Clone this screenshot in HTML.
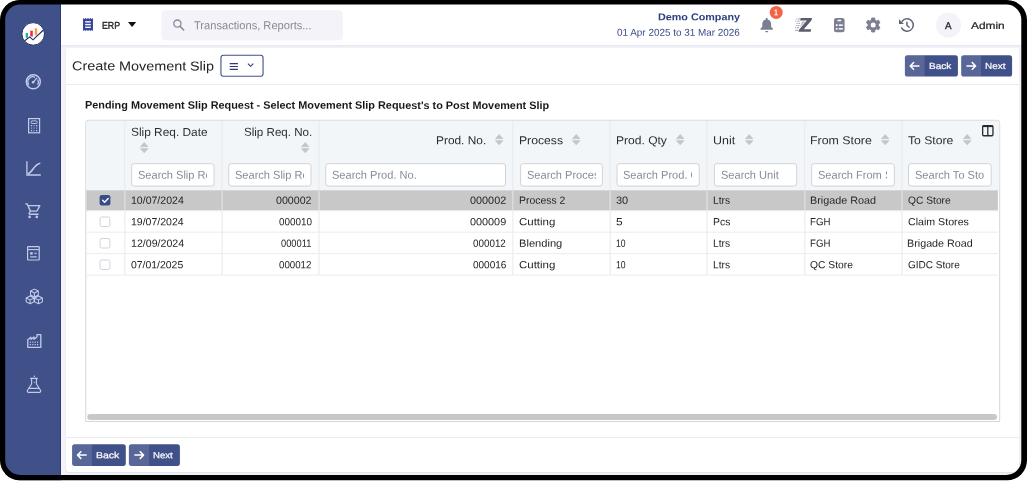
<!DOCTYPE html>
<html lang="en"><head><meta charset="utf-8"><title>Create Movement Slip</title>
<style>
html,body{margin:0;padding:0;}
body{-webkit-font-smoothing:antialiased;width:1027px;height:481px;overflow:hidden;background:#fff;font-family:"Liberation Sans",sans-serif;position:relative;}
.a{position:absolute;box-sizing:border-box;}
.t{position:absolute;white-space:nowrap;line-height:20px;transform-origin:0 0;}
svg{position:absolute;overflow:visible;}
</style></head><body>
<div class="a" id="screen" style="left:0;top:0;width:1027px;height:481px;background:#f3f3f9;overflow:hidden;will-change:transform;">
<div class="a" style="left:0;top:0;width:1027px;height:481px;">
<div class="a" style="left:5.00px;top:0.00px;width:56.00px;height:481.00px;background:#405189;"></div>
<div class="a" style="left:60.00px;top:0.00px;width:1.00px;height:481.00px;background:#2b3b7a;"></div>
<div class="a" style="left:61.00px;top:0.00px;width:966.00px;height:45.00px;background:#fff;box-shadow:0 1px 2px rgba(56,65,74,.08);"></div>
<div class="a" style="left:65.80px;top:47.80px;width:953.10px;height:424.60px;background:#fff;border-radius:3px;box-shadow:0 1px 2px rgba(56,65,74,.10);"></div>
<div class="a" style="left:65.80px;top:83.80px;width:953.10px;height:1.00px;background:#e9ebec;"></div>
<div class="a" style="left:65.80px;top:437.00px;width:953.10px;height:1.00px;background:#e9ebec;"></div>
<svg style="left:83px;top:17.8px" width="10" height="13" viewBox="0 0 10 13"><path d="M0 0l1.25 .9 1.25-.9 1.25 .9 1.25-.9 1.25 .9 1.25-.9 1.25 .9 1.25-.9v13l-1.25-.9-1.25 .9-1.25-.9-1.25 .9-1.25-.9-1.25 .9-1.25-.9-1.25 .9z" fill="#34479a"/><rect x="2.2" y="3.2" width="5.6" height="1.3" fill="#fff"/><rect x="2.2" y="5.9" width="5.6" height="1.3" fill="#fff"/><rect x="2.2" y="8.6" width="5.6" height="1.3" fill="#fff"/></svg>
<span class="t" style="left:102.08px;top:15px;font-size:9.8px;color:#212529;transform:translate(0,0.79px) rotate(.05deg) scaleX(0.8977);-webkit-text-stroke:.35px #212529;">ERP</span>
<svg style="left:127.8px;top:21.8px" width="8.2" height="5" viewBox="0 0 8.2 5"><path d="M0 0h8.2l-4.1 5z" fill="#111"/></svg>
<svg style="left:160px;top:9px" width="184" height="33"><rect x="1.50" y="1.30" width="181.50" height="29.90" rx="4" fill="#f3f3f9"/></svg>
<svg style="left:172px;top:18px" width="14" height="14" viewBox="0 0 14 14"><circle cx="5.4" cy="5.6" r="3.6" fill="none" stroke="#878a99" stroke-width="1.3"/><path d="M8.1 8.4l3.6 3.6" stroke="#878a99" stroke-width="1.5" stroke-linecap="round"/></svg>
<span class="t" style="left:193.76px;top:15px;font-size:11.5px;color:#878a99;transform:translate(0,0.25px) rotate(.05deg) scaleX(0.9664);">Transactions, Reports...</span>
<span class="t" style="left:657.68px;top:7px;font-size:9.9px;color:#2c3e7e;transform:translate(0,0.16px) rotate(.05deg) scaleX(1.0905);font-weight:700;">Demo Company</span>
<span class="t" style="left:617.11px;top:22px;font-size:9.9px;color:#3b4c8c;transform:translate(0,0.75px) rotate(.05deg) scaleX(1.0031);">01 Apr 2025 to 31 Mar 2026</span>
<svg style="left:760px;top:18px" width="13.4" height="14.6" viewBox="0 0 13.4 14.6"><path d="M6.7 0c.6 0 1 .4 1 1v.4c2 .5 3.4 2.2 3.4 4.4v3l1.7 1.8c.4.4.1 1.1-.5 1.1H1.100c-.6 0-.9-.7-.5-1.100l1.700-1.800v-3c0-2.200 1.400-3.900 3.400-4.400v-.4c0-.6.400-1 1-1z" fill="#7c7f92"/><rect x="5.2" y="13" width="3" height="1.2" rx=".6" fill="#7c7f92"/></svg>
<svg style="left:768px;top:4px" width="16" height="16"><rect x="1.70" y="1.90" width="13.00" height="13.00" rx="6.5" fill="#f06548"/></svg>
<span class="t" style="left:774.15px;top:2px;font-size:8.4px;color:#fff;transform:translate(0,0.30px) rotate(.05deg) scaleX(0.8449);font-weight:700;">1</span>
<svg style="left:0;top:0" width="1027" height="60"><path d="M800.6 18.100H812.200L811.400 20.500L803.800 29.200H811.200L810.600 31.700H798.500L799.200 29.400L806.900 20.500H800.100Z" fill="#5c5e70"/><path d="M802 21.800h3.300l-.8 .9h-2.800zM801.300 23.600h2.400l-.8 .9h-1.900zM800.500 25.400h1.800l-.8 .9h-1.300z" fill="#9a9cab"/><g fill="#9fa1ae"><rect x="796.200" y="18.600" width="1.100" height="1"/><rect x="798.200" y="18.400" width="1.700" height="1.100"/><rect x="795.400" y="20.800" width="1" height="1"/><rect x="797.400" y="20.600" width="2" height="1.100"/><rect x="796.600" y="23" width="1.100" height="1"/><rect x="798.500" y="22.800" width="1.600" height="1.100"/><rect x="795.800" y="25.200" width="1" height="1"/><rect x="797.600" y="25" width="1.800" height="1.100"/><rect x="795" y="27.400" width="1.100" height="1"/><rect x="796.800" y="27.200" width="2.200" height="1.100"/><rect x="794.800" y="30" width="1" height="1"/><rect x="796.300" y="29.800" width="2" height="1.200"/></g></svg>
<svg style="left:834.4px;top:17.9px" width="10.600" height="14.200" viewBox="0 0 10.600 14.200"><rect x="0" y="0" width="10.600" height="14.200" rx="2.300" fill="#7c7f92"/><rect x="3.300" y="1.800" width="4" height="1.500" rx=".7" fill="#fff"/><g fill="#fff"><rect x="1.900" y="6.200" width="1.600" height="1.900"/><rect x="4.800" y="6.400" width="4" height="1.500"/><rect x="1.900" y="10" width="1.600" height="1.700"/><rect x="4.800" y="10.100" width="4" height="1.500"/></g></svg>
<svg style="left:0;top:0" width="1027" height="60"><path d="M871.59 20.05 L871.72 18.06 L874.68 18.06 L874.81 20.05 L876.68 21.14 L878.48 20.25 L879.95 22.81 L878.29 23.92 L878.29 26.08 L879.95 27.19 L878.48 29.75 L876.68 28.86 L874.81 29.95 L874.68 31.94 L871.72 31.94 L871.59 29.95 L869.72 28.86 L867.92 29.75 L866.45 27.19 L868.11 26.08 L868.11 23.92 L866.45 22.81 L867.92 20.25 L869.72 21.14Z" fill="#7c7f92" stroke="#7c7f92" stroke-width="1" stroke-linejoin="round"/><circle cx="873.2" cy="25" r="2.5" fill="#fff"/></svg>
<svg style="left:0;top:0" width="1027" height="60"><path d="M902.21 21.18A6.2 6.2 0 1 1 901.63 27.91" fill="none" stroke="#626579" stroke-width="1.500" stroke-linecap="round"/><path d="M899 19.300V23.900H904Z" fill="#626579"/><path d="M906.900 22.200V25.300L909.200 27.300" fill="none" stroke="#626579" stroke-width="1.500" stroke-linecap="round" stroke-linejoin="round"/></svg>
<svg style="left:934px;top:11px" width="28" height="28"><rect x="1.80" y="1.50" width="25.20" height="25.20" rx="12.6" fill="#f3f3f9"/></svg>
<span class="t" style="left:944.88px;top:15px;font-size:9.8px;color:#212529;transform:translate(0,1.00px) rotate(.05deg) scaleX(1.0004);-webkit-text-stroke:.3px #212529;">A</span>
<span class="t" style="left:971.08px;top:15px;font-size:10px;color:#212529;transform:translate(0,0.99px) rotate(.05deg) scaleX(1.1890);-webkit-text-stroke:.2px #212529;">Admin</span>
<svg style="left:20px;top:20px" width="28" height="28" viewBox="20 20 28 28"><circle cx="33.200" cy="33.900" r="11.300" fill="#fff" stroke="#22316c" stroke-width="1"/><rect x="25.700" y="33" width="2.300" height="4.800" fill="#1fb58f"/><rect x="30.300" y="30.700" width="2.500" height="5.800" fill="#e8264f"/><rect x="34.800" y="28.300" width="2.400" height="7" fill="#ff9a3c"/><path d="M24.700 40.700L29.700 36.900L33 39.800L43.400 30" fill="none" stroke="#1b2a63" stroke-width="1.100"/></svg>
<svg style="left:23px;top:71px" width="22" height="22" viewBox="23 71 22 22"><circle cx="33.300" cy="81.700" r="7" fill="none" stroke="#c3cbec" stroke-width="1.450"/><path d="M28.900 84.800a5 5 0 0 1 6.200-7.500M37.700 79.500a5 5 0 0 1 0 5.300" fill="none" stroke="#c3cbec" stroke-width="1.300"/><circle cx="33.100" cy="82.300" r="1.300" fill="#c3cbec"/><path d="M33.300 82L36.800 78.200" stroke="#c3cbec" stroke-width="1.200" stroke-linecap="round"/></svg>
<svg style="left:27.900px;top:117.900px" width="12.200" height="15.400" viewBox="0 0 12.200 15.400"><rect x=".6" y=".6" width="11" height="14.200" fill="none" stroke="#c3cbec" stroke-width="1.200"/><rect x="3.100" y="2.900" width="6" height="2.600" rx=".8" fill="none" stroke="#c3cbec" stroke-width=".9"/><g fill="#c3cbec"><rect x="2.900" y="7" width="1.300" height="1.300"/><rect x="5.450" y="7" width="1.300" height="1.300" opacity=".6"/><rect x="8" y="7" width="1.300" height="1.300"/><rect x="2.900" y="9.500" width="1.300" height="1.300" opacity=".6"/><rect x="5.450" y="9.500" width="1.300" height="1.300" opacity=".6"/><rect x="8" y="9.500" width="1.300" height="1.300" opacity=".6"/><rect x="2.900" y="12" width="1.300" height="1.300"/><rect x="5.450" y="12" width="1.300" height="1.300" opacity=".6"/><rect x="8" y="12" width="1.300" height="1.300"/></g></svg>
<svg style="left:25px;top:160px" width="18" height="18" viewBox="25 160 18 18"><path d="M26.900 161.200V175H40.800" fill="none" stroke="#c3cbec" stroke-width="1.300"/><path d="M27.800 173.700C33 172.500 33.500 164.500 40.300 163.300" fill="none" stroke="#c3cbec" stroke-width="1.500"/></svg>
<svg style="left:24px;top:202px" width="18" height="18" viewBox="24 202 18 18"><path d="M25.300 203.800h1.800l3.300 7.300l-1.200 1.900c-.3.500 0 1.200.7 1.200h8.600M28.700 205.600h11.100l-2.500 4.900c-.2.400-.5.600-1 .6h-5.900" fill="none" stroke="#c3cbec" stroke-width="1.350" stroke-linejoin="round"/><circle cx="29.600" cy="216.900" r="1.300" fill="#c3cbec"/><circle cx="36.800" cy="216.900" r="1.300" fill="#c3cbec"/></svg>
<svg style="left:27.200px;top:246px" width="13" height="15" viewBox="0 0 13 15"><rect x=".6" y=".6" width="11.600" height="13.400" rx=".5" fill="none" stroke="#c3cbec" stroke-width="1.200"/><path d="M.6 3.600h11.600" stroke="#c3cbec" stroke-width="1.100"/><rect x="3.200" y="6.200" width="2.500" height="2.400" fill="#c3cbec"/><rect x="7.200" y="6.700" width="2.600" height="1.400" fill="#c3cbec" opacity=".8"/><rect x="3.200" y="10.300" width="6.600" height="1.200" fill="#c3cbec"/></svg>
<svg style="left:24px;top:287px" width="20" height="20" viewBox="24 287 20 20"><path d="M34.4 289.10L38.30 291.05V294.95L34.4 296.90L30.50 294.95V291.05ZM30.50 291.05L34.4 293.00L38.30 291.05M34.4 293.00V296.90M30.1 296.00L34.00 297.95V301.85L30.1 303.80L26.20 301.85V297.95ZM26.20 297.95L30.1 299.90L34.00 297.95M30.1 299.90V303.80M38.5 296.00L42.40 297.95V301.85L38.5 303.80L34.60 301.85V297.95ZM34.60 297.95L38.5 299.90L42.40 297.95M38.5 299.90V303.80" fill="none" stroke="#c3cbec" stroke-width="1.050" stroke-linejoin="round"/></svg>
<svg style="left:26px;top:333px" width="16" height="16" viewBox="26 333 16 16"><path d="M27.800 347.400V339.800L31 337.300V339.300L34 337V339.300L37 337V334.700H40.800V347.400Z" fill="none" stroke="#c3cbec" stroke-width="1.300" stroke-linejoin="round"/><g fill="#c3cbec"><rect x="29.800" y="341.600" width="1.200" height="1.200"/><rect x="32.200" y="341.600" width="1.200" height="1.200"/><rect x="34.600" y="341.600" width="1.200" height="1.200"/><rect x="37" y="341.600" width="1.200" height="1.200"/><rect x="29.800" y="344" width="1.200" height="1.200"/><rect x="32.200" y="344" width="1.200" height="1.200"/><rect x="34.600" y="344" width="1.200" height="1.200"/><rect x="37" y="344" width="1.200" height="1.200"/></g></svg>
<svg style="left:25px;top:374px" width="18" height="20" viewBox="25 374 18 20"><path d="M30.600 378.400H37.400M31.600 378.600V384L27.500 390.200C26.900 391.300 27.500 392.400 28.800 392.400H39.200C40.500 392.400 41.100 391.300 40.500 390.200L36.400 384V378.600M29 388.300H39" fill="none" stroke="#c3cbec" stroke-width="1.150" stroke-linejoin="round" stroke-linecap="round"/><circle cx="34.400" cy="376.300" r=".8" fill="#c3cbec"/><circle cx="34.300" cy="382.300" r=".6" fill="#c3cbec"/></svg>
<span class="t" style="left:71.77px;top:56px;font-size:13px;color:#212529;transform:translate(0,0.34px) rotate(.05deg) scaleX(1.1081);word-spacing:-0.214px;">Create Movement Slip</span>
<svg style="left:219px;top:53px" width="46" height="25"><rect x="1.95" y="2.25" width="42.10" height="21.00" rx="2.45" fill="#fff" stroke="#405189" stroke-width="1.1"/></svg>
<svg style="left:229px;top:61px" width="26" height="10" viewBox="229 61 26 10"><path d="M229.700 63.600h8.200M229.700 66.500h8.200M229.700 69.400h8.200" stroke="#2a3a7a" stroke-width="1.100"/><path d="M247.900 63.600l2.700 2.700l2.700-2.700" fill="none" stroke="#2a3a7a" stroke-width="1.100"/></svg>
<svg style="left:0;top:0" width="1027" height="481"><rect x="904.90" y="55.30" width="53.00" height="21.30" rx="2.6" fill="#405189"/><path d="M907.50 55.30H924.60V76.60H907.50A2.6 2.6 0 0 1 904.90 74.00V57.90A2.6 2.6 0 0 1 907.50 55.30Z" fill="#fff" fill-opacity=".13"/><path d="M919.45 65.95H910.55M914.05 62.15L910.25 65.95L914.05 69.75" fill="none" stroke="#fff" stroke-width="1.500" stroke-linejoin="round"/></svg>
<span class="t" style="left:928.57px;top:55px;font-size:8.9px;color:#fff;transform:translate(0,0.89px) rotate(.05deg) scaleX(1.1330);-webkit-text-stroke:.2px #fff;">Back</span>
<svg style="left:0;top:0" width="1027" height="481"><rect x="961.20" y="55.30" width="50.90" height="21.30" rx="2.6" fill="#405189"/><path d="M963.80 55.30H981.00V76.60H963.80A2.6 2.6 0 0 1 961.20 74.00V57.90A2.6 2.6 0 0 1 963.80 55.30Z" fill="#fff" fill-opacity=".13"/><path d="M966.40 65.95H975.30M971.80 62.15L975.60 65.95L971.80 69.75" fill="none" stroke="#fff" stroke-width="1.500" stroke-linejoin="round"/></svg>
<span class="t" style="left:984.68px;top:55px;font-size:8.9px;color:#fff;transform:translate(0,0.89px) rotate(.05deg) scaleX(1.1196);-webkit-text-stroke:.2px #fff;">Next</span>
<svg style="left:0;top:0" width="1027" height="481"><rect x="72.10" y="444.30" width="53.70" height="21.60" rx="2.6" fill="#405189"/><path d="M74.70 444.30H91.90V465.90H74.70A2.6 2.6 0 0 1 72.10 463.30V446.90A2.6 2.6 0 0 1 74.70 444.30Z" fill="#fff" fill-opacity=".13"/><path d="M86.70 455.10H77.80M81.30 451.30L77.50 455.10L81.30 458.90" fill="none" stroke="#fff" stroke-width="1.500" stroke-linejoin="round"/></svg>
<span class="t" style="left:95.73px;top:445px;font-size:8.9px;color:#fff;transform:translate(0,0.29px) rotate(.05deg) scaleX(1.1855);-webkit-text-stroke:.2px #fff;">Back</span>
<svg style="left:0;top:0" width="1027" height="481"><rect x="128.90" y="444.30" width="51.00" height="21.60" rx="2.6" fill="#405189"/><path d="M131.50 444.30H149.20V465.90H131.50A2.6 2.6 0 0 1 128.90 463.30V446.90A2.6 2.6 0 0 1 131.50 444.30Z" fill="#fff" fill-opacity=".13"/><path d="M134.35 455.10H143.25M139.75 451.30L143.55 455.10L139.75 458.90" fill="none" stroke="#fff" stroke-width="1.500" stroke-linejoin="round"/></svg>
<span class="t" style="left:153.11px;top:445px;font-size:8.9px;color:#fff;transform:translate(0,0.29px) rotate(.05deg) scaleX(1.0853);-webkit-text-stroke:.2px #fff;">Next</span>
<span class="t" style="left:84.77px;top:94px;font-size:10.8px;color:#16181b;transform:translate(0,0.60px) rotate(.05deg) scaleX(1.0073);font-weight:700;word-spacing:-0.011px;">Pending Movement Slip Request - Select Movement Slip Request&#x27;s to Post Movement Slip</span>
<svg style="left:0;top:0" width="1027" height="481"><path d="M85.80 421.50V122.80A2.500 2.500 0 0 1 88.30 120.30H997.20A2.500 2.500 0 0 1 999.70 122.80V421.50Z" fill="#fff" stroke="#d3d5d8" stroke-width="1"/></svg>
<svg style="left:85px;top:119px" width="916" height="73"><rect x="1.30" y="1.80" width="912.90" height="69.50" rx="2" fill="#f3f6f9"/></svg>
<svg style="left:85px;top:122px" width="916" height="70"><rect x="1.30" y="1.80" width="912.90" height="66.50" rx="0" fill="#f3f6f9"/></svg>
<svg style="left:85px;top:189px" width="914" height="23"><rect x="1.30" y="1.30" width="911.60" height="20.20" rx="0" fill="#c8c8c8"/></svg>
<svg style="left:122px;top:119px" width="5" height="73"><rect x="1.95" y="1.80" width="1.40" height="69.50" rx="0" fill="#eaedf0"/></svg>
<svg style="left:122px;top:189px" width="5" height="23"><rect x="1.95" y="1.30" width="1.60" height="20.20" rx="0" fill="#dbdbdb"/></svg>
<svg style="left:122px;top:209px" width="5" height="68"><rect x="1.95" y="1.50" width="1.60" height="64.70" rx="0" fill="#f0f1f2"/></svg>
<svg style="left:220px;top:119px" width="4" height="73"><rect x="1.35" y="1.80" width="1.40" height="69.50" rx="0" fill="#eaedf0"/></svg>
<svg style="left:220px;top:189px" width="4" height="23"><rect x="1.35" y="1.30" width="1.60" height="20.20" rx="0" fill="#dbdbdb"/></svg>
<svg style="left:220px;top:209px" width="4" height="68"><rect x="1.35" y="1.50" width="1.60" height="64.70" rx="0" fill="#f0f1f2"/></svg>
<svg style="left:317px;top:119px" width="4" height="73"><rect x="1.25" y="1.80" width="1.40" height="69.50" rx="0" fill="#eaedf0"/></svg>
<svg style="left:317px;top:189px" width="4" height="23"><rect x="1.25" y="1.30" width="1.60" height="20.20" rx="0" fill="#dbdbdb"/></svg>
<svg style="left:317px;top:209px" width="4" height="68"><rect x="1.25" y="1.50" width="1.60" height="64.70" rx="0" fill="#f0f1f2"/></svg>
<svg style="left:510px;top:119px" width="5" height="73"><rect x="1.95" y="1.80" width="1.40" height="69.50" rx="0" fill="#eaedf0"/></svg>
<svg style="left:510px;top:189px" width="5" height="23"><rect x="1.95" y="1.30" width="1.60" height="20.20" rx="0" fill="#dbdbdb"/></svg>
<svg style="left:510px;top:209px" width="5" height="68"><rect x="1.95" y="1.50" width="1.60" height="64.70" rx="0" fill="#f0f1f2"/></svg>
<svg style="left:608px;top:119px" width="4" height="73"><rect x="1.35" y="1.80" width="1.40" height="69.50" rx="0" fill="#eaedf0"/></svg>
<svg style="left:608px;top:189px" width="4" height="23"><rect x="1.35" y="1.30" width="1.60" height="20.20" rx="0" fill="#dbdbdb"/></svg>
<svg style="left:608px;top:209px" width="4" height="68"><rect x="1.35" y="1.50" width="1.60" height="64.70" rx="0" fill="#f0f1f2"/></svg>
<svg style="left:705px;top:119px" width="4" height="73"><rect x="1.25" y="1.80" width="1.40" height="69.50" rx="0" fill="#eaedf0"/></svg>
<svg style="left:705px;top:189px" width="4" height="23"><rect x="1.25" y="1.30" width="1.60" height="20.20" rx="0" fill="#dbdbdb"/></svg>
<svg style="left:705px;top:209px" width="4" height="68"><rect x="1.25" y="1.50" width="1.60" height="64.70" rx="0" fill="#f0f1f2"/></svg>
<svg style="left:802px;top:119px" width="5" height="73"><rect x="1.95" y="1.80" width="1.40" height="69.50" rx="0" fill="#eaedf0"/></svg>
<svg style="left:802px;top:189px" width="5" height="23"><rect x="1.95" y="1.30" width="1.60" height="20.20" rx="0" fill="#dbdbdb"/></svg>
<svg style="left:802px;top:209px" width="5" height="68"><rect x="1.95" y="1.50" width="1.60" height="64.70" rx="0" fill="#f0f1f2"/></svg>
<svg style="left:900px;top:119px" width="4" height="73"><rect x="1.25" y="1.80" width="1.40" height="69.50" rx="0" fill="#eaedf0"/></svg>
<svg style="left:900px;top:189px" width="4" height="23"><rect x="1.25" y="1.30" width="1.60" height="20.20" rx="0" fill="#dbdbdb"/></svg>
<svg style="left:900px;top:209px" width="4" height="68"><rect x="1.25" y="1.50" width="1.60" height="64.70" rx="0" fill="#f0f1f2"/></svg>
<svg style="left:85px;top:209px" width="914" height="4"><rect x="1.30" y="1.50" width="911.60" height="0.80" rx="0" fill="#ecedee"/></svg>
<svg style="left:85px;top:230px" width="914" height="4"><rect x="1.30" y="1.60" width="911.60" height="1.10" rx="0" fill="#ecedee"/></svg>
<svg style="left:85px;top:252px" width="914" height="4"><rect x="1.30" y="1.10" width="911.60" height="1.10" rx="0" fill="#ecedee"/></svg>
<svg style="left:85px;top:273px" width="914" height="4"><rect x="1.30" y="1.60" width="911.60" height="1.10" rx="0" fill="#ecedee"/></svg>
<span class="t" style="left:131.07px;top:121px;font-size:11.6px;color:#2a2e32;transform:translate(0,0.87px) rotate(.05deg) scaleX(1.0249);">Slip Req. Date</span>
<svg style="left:140.2px;top:142.2px" width="8.400" height="11.300" viewBox="0 0 8.400 11.300"><path d="M.5 4.700L4.200 .5L7.900 4.700Z" fill="#c4c5c9" stroke="#c4c5c9" stroke-width=".8" stroke-linejoin="round"/><path d="M.5 6.700L4.200 10.800L7.900 6.700Z" fill="#c4c5c9" stroke="#c4c5c9" stroke-width=".8" stroke-linejoin="round"/></svg>
<span class="t" style="left:244.08px;top:121px;font-size:11.6px;color:#2a2e32;transform:translate(0,0.87px) rotate(.05deg) scaleX(0.9990);">Slip Req. No.</span>
<svg style="left:300.7px;top:142.2px" width="8.400" height="11.300" viewBox="0 0 8.400 11.300"><path d="M.5 4.700L4.200 .5L7.900 4.700Z" fill="#c4c5c9" stroke="#c4c5c9" stroke-width=".8" stroke-linejoin="round"/><path d="M.5 6.700L4.200 10.800L7.900 6.700Z" fill="#c4c5c9" stroke="#c4c5c9" stroke-width=".8" stroke-linejoin="round"/></svg>
<span class="t" style="left:436.32px;top:130px;font-size:11.6px;color:#2a2e32;transform:translate(0,0.18px) rotate(.05deg) scaleX(1.0257);">Prod. No.</span>
<svg style="left:494.6px;top:133.8px" width="8.400" height="11.300" viewBox="0 0 8.400 11.300"><path d="M.5 4.700L4.200 .5L7.900 4.700Z" fill="#c4c5c9" stroke="#c4c5c9" stroke-width=".8" stroke-linejoin="round"/><path d="M.5 6.700L4.200 10.800L7.900 6.700Z" fill="#c4c5c9" stroke="#c4c5c9" stroke-width=".8" stroke-linejoin="round"/></svg>
<span class="t" style="left:519.10px;top:130px;font-size:11.6px;color:#2a2e32;transform:translate(0,0.18px) rotate(.05deg) scaleX(1.0511);">Process</span>
<svg style="left:572px;top:133.8px" width="8.400" height="11.300" viewBox="0 0 8.400 11.300"><path d="M.5 4.700L4.200 .5L7.900 4.700Z" fill="#c4c5c9" stroke="#c4c5c9" stroke-width=".8" stroke-linejoin="round"/><path d="M.5 6.700L4.200 10.800L7.900 6.700Z" fill="#c4c5c9" stroke="#c4c5c9" stroke-width=".8" stroke-linejoin="round"/></svg>
<span class="t" style="left:616.01px;top:130px;font-size:11.6px;color:#2a2e32;transform:translate(0,0.18px) rotate(.05deg) scaleX(1.0391);">Prod. Qty</span>
<svg style="left:676.1px;top:133.8px" width="8.400" height="11.300" viewBox="0 0 8.400 11.300"><path d="M.5 4.700L4.200 .5L7.900 4.700Z" fill="#c4c5c9" stroke="#c4c5c9" stroke-width=".8" stroke-linejoin="round"/><path d="M.5 6.700L4.200 10.800L7.900 6.700Z" fill="#c4c5c9" stroke="#c4c5c9" stroke-width=".8" stroke-linejoin="round"/></svg>
<span class="t" style="left:712.94px;top:130px;font-size:11.6px;color:#2a2e32;transform:translate(0,0.19px) rotate(.05deg) scaleX(1.0731);">Unit</span>
<svg style="left:744.8px;top:133.8px" width="8.400" height="11.300" viewBox="0 0 8.400 11.300"><path d="M.5 4.700L4.200 .5L7.900 4.700Z" fill="#c4c5c9" stroke="#c4c5c9" stroke-width=".8" stroke-linejoin="round"/><path d="M.5 6.700L4.200 10.800L7.900 6.700Z" fill="#c4c5c9" stroke="#c4c5c9" stroke-width=".8" stroke-linejoin="round"/></svg>
<span class="t" style="left:810.09px;top:130px;font-size:11.6px;color:#2a2e32;transform:translate(0,0.17px) rotate(.05deg) scaleX(1.0663);">From Store</span>
<svg style="left:880.5px;top:133.8px" width="8.400" height="11.300" viewBox="0 0 8.400 11.300"><path d="M.5 4.700L4.200 .5L7.900 4.700Z" fill="#c4c5c9" stroke="#c4c5c9" stroke-width=".8" stroke-linejoin="round"/><path d="M.5 6.700L4.200 10.800L7.900 6.700Z" fill="#c4c5c9" stroke="#c4c5c9" stroke-width=".8" stroke-linejoin="round"/></svg>
<span class="t" style="left:908.13px;top:130px;font-size:11.6px;color:#2a2e32;transform:translate(0,0.18px) rotate(.05deg) scaleX(1.0511);">To Store</span>
<svg style="left:962.5px;top:133.8px" width="8.400" height="11.300" viewBox="0 0 8.400 11.300"><path d="M.5 4.700L4.200 .5L7.900 4.700Z" fill="#c4c5c9" stroke="#c4c5c9" stroke-width=".8" stroke-linejoin="round"/><path d="M.5 6.700L4.200 10.800L7.900 6.700Z" fill="#c4c5c9" stroke="#c4c5c9" stroke-width=".8" stroke-linejoin="round"/></svg>
<svg style="left:982.200px;top:125.200px" width="11.600" height="11.400" viewBox="0 0 11.600 11.400"><rect x=".65" y=".65" width="10.300" height="10.100" rx="1" fill="none" stroke="#2b2b2b" stroke-width="1.300"/><path d="M.6 1.300h10.400" stroke="#2b2b2b" stroke-width="1.600"/><path d="M5.800 1v10" stroke="#2b2b2b" stroke-width="1.300"/></svg>
<svg style="left:130px;top:162px" width="86" height="26"><rect x="1.60" y="1.70" width="82.50" height="22.40" rx="2.50" fill="#fff" stroke="#ced4da" stroke-width="1"/></svg>
<div class="a" style="left:132.10px;top:164px;width:75.20px;height:22px;overflow:hidden;">
<span class="t" style="left:5.80px;top:0px;font-size:11.4px;color:#878a99;transform:translate(0,0.75px) rotate(.05deg) scaleX(0.9697);">Search Slip Req. Date</span>
</div>
<svg style="left:227px;top:162px" width="86" height="26"><rect x="1.70" y="1.70" width="82.30" height="22.40" rx="2.50" fill="#fff" stroke="#ced4da" stroke-width="1"/></svg>
<div class="a" style="left:229.20px;top:164px;width:75.00px;height:22px;overflow:hidden;">
<span class="t" style="left:5.80px;top:0px;font-size:11.4px;color:#878a99;transform:translate(0,0.76px) rotate(.05deg) scaleX(0.9697);">Search Slip Req. No.</span>
</div>
<svg style="left:324px;top:162px" width="183" height="26"><rect x="1.80" y="1.70" width="179.70" height="22.40" rx="2.50" fill="#fff" stroke="#ced4da" stroke-width="1"/></svg>
<div class="a" style="left:326.30px;top:164px;width:172.40px;height:22px;overflow:hidden;">
<span class="t" style="left:5.80px;top:0px;font-size:11.4px;color:#878a99;transform:translate(0,0.76px) rotate(.05deg) scaleX(0.9697);">Search Prod. No.</span>
</div>
<svg style="left:519px;top:162px" width="85" height="26"><rect x="1.60" y="1.70" width="81.80" height="22.40" rx="2.50" fill="#fff" stroke="#ced4da" stroke-width="1"/></svg>
<div class="a" style="left:521.10px;top:164px;width:74.50px;height:22px;overflow:hidden;">
<span class="t" style="left:5.80px;top:0px;font-size:11.4px;color:#878a99;transform:translate(0,0.77px) rotate(.05deg) scaleX(0.9697);">Search Process</span>
</div>
<svg style="left:615px;top:162px" width="86" height="26"><rect x="2.00" y="1.70" width="82.20" height="22.40" rx="2.50" fill="#fff" stroke="#ced4da" stroke-width="1"/></svg>
<div class="a" style="left:617.50px;top:164px;width:74.90px;height:22px;overflow:hidden;">
<span class="t" style="left:5.80px;top:0px;font-size:11.4px;color:#878a99;transform:translate(0,0.76px) rotate(.05deg) scaleX(0.9697);">Search Prod. Qty</span>
</div>
<svg style="left:712px;top:162px" width="87" height="26"><rect x="2.40" y="1.70" width="82.30" height="22.40" rx="2.50" fill="#fff" stroke="#ced4da" stroke-width="1"/></svg>
<div class="a" style="left:714.90px;top:164px;width:75.00px;height:22px;overflow:hidden;">
<span class="t" style="left:5.80px;top:0px;font-size:11.4px;color:#878a99;transform:translate(0,0.77px) rotate(.05deg) scaleX(0.9697);">Search Unit</span>
</div>
<svg style="left:810px;top:162px" width="86" height="26"><rect x="1.60" y="1.70" width="82.70" height="22.40" rx="2.50" fill="#fff" stroke="#ced4da" stroke-width="1"/></svg>
<div class="a" style="left:812.10px;top:164px;width:75.40px;height:22px;overflow:hidden;">
<span class="t" style="left:5.80px;top:0px;font-size:11.4px;color:#878a99;transform:translate(0,0.76px) rotate(.05deg) scaleX(0.9697);">Search From Store</span>
</div>
<svg style="left:907px;top:162px" width="86" height="26"><rect x="1.50" y="1.70" width="82.70" height="22.40" rx="2.50" fill="#fff" stroke="#ced4da" stroke-width="1"/></svg>
<div class="a" style="left:909.00px;top:164px;width:75.40px;height:22px;overflow:hidden;">
<span class="t" style="left:5.80px;top:0px;font-size:11.4px;color:#878a99;transform:translate(0,0.77px) rotate(.05deg) scaleX(0.9697);">Search To Store</span>
</div>
<svg style="left:98px;top:194px" width="14" height="13"><rect x="1.60" y="1.00" width="10.80" height="10.50" rx="2.2" fill="#3a4b8a"/></svg>
<svg style="left:99.600px;top:195.00px" width="10.800" height="10.500" viewBox="0 0 10.800 10.500"><path d="M2.700 5.300L4.600 7.200L8.200 3.500" fill="none" stroke="#fff" stroke-width="1.400" stroke-linecap="round" stroke-linejoin="round"/></svg>
<span class="t" style="left:130.70px;top:190px;font-size:10.4px;color:#212529;transform:translate(0,0.68px) rotate(.05deg) scaleX(1.0145);">10/07/2024</span>
<span class="t" style="left:276.28px;top:190px;font-size:10.4px;color:#212529;transform:translate(0,0.68px) rotate(.05deg) scaleX(1.0243);">000002</span>
<span class="t" style="left:470.28px;top:190px;font-size:10.4px;color:#212529;transform:translate(0,0.68px) rotate(.05deg) scaleX(1.0450);">000002</span>
<span class="t" style="left:518.64px;top:190px;font-size:10.4px;color:#212529;transform:translate(0,0.68px) rotate(.05deg) scaleX(1.0030);">Process 2</span>
<span class="t" style="left:616.48px;top:190px;font-size:10.4px;color:#212529;transform:translate(0,0.69px) rotate(.05deg) scaleX(1.0591);">30</span>
<span class="t" style="left:713.06px;top:190px;font-size:10.4px;color:#212529;transform:translate(0,0.69px) rotate(.05deg) scaleX(0.9870);">Ltrs</span>
<span class="t" style="left:809.91px;top:190px;font-size:10.4px;color:#212529;transform:translate(0,0.67px) rotate(.05deg) scaleX(1.0406);">Brigade Road</span>
<span class="t" style="left:907.82px;top:190px;font-size:10.4px;color:#212529;transform:translate(0,0.68px) rotate(.05deg) scaleX(0.9858);">QC Store</span>
<svg style="left:98px;top:215px" width="14" height="13"><rect x="2.10" y="2.00" width="9.80" height="9.50" rx="1.70" fill="#fff" stroke="#cfd3dc" stroke-width="1"/></svg>
<span class="t" style="left:130.70px;top:212px;font-size:10.4px;color:#212529;transform:translate(0,0.18px) rotate(.05deg) scaleX(1.0126);">19/07/2024</span>
<span class="t" style="left:278.61px;top:212px;font-size:10.4px;color:#212529;transform:translate(0,0.19px) rotate(.05deg) scaleX(0.9530);">000010</span>
<span class="t" style="left:470.08px;top:212px;font-size:10.4px;color:#212529;transform:translate(0,0.18px) rotate(.05deg) scaleX(1.0441);">000009</span>
<span class="t" style="left:518.91px;top:212px;font-size:10.4px;color:#212529;transform:translate(0,0.18px) rotate(.05deg) scaleX(1.1055);">Cutting</span>
<span class="t" style="left:616.43px;top:212px;font-size:10.4px;color:#212529;transform:translate(0,0.20px) rotate(.05deg) scaleX(1.1360);">5</span>
<span class="t" style="left:713.04px;top:212px;font-size:10.4px;color:#212529;transform:translate(0,0.19px) rotate(.05deg) scaleX(1.0056);">Pcs</span>
<span class="t" style="left:810.01px;top:212px;font-size:10.4px;color:#212529;transform:translate(0,0.19px) rotate(.05deg) scaleX(0.9280);">FGH</span>
<span class="t" style="left:907.76px;top:212px;font-size:10.4px;color:#212529;transform:translate(0,0.17px) rotate(.05deg) scaleX(1.0235);">Claim Stores</span>
<svg style="left:98px;top:237px" width="14" height="13"><rect x="2.10" y="1.50" width="9.80" height="9.50" rx="1.70" fill="#fff" stroke="#cfd3dc" stroke-width="1"/></svg>
<span class="t" style="left:130.69px;top:233px;font-size:10.4px;color:#212529;transform:translate(0,0.68px) rotate(.05deg) scaleX(1.0224);">12/09/2024</span>
<span class="t" style="left:281.34px;top:233px;font-size:10.4px;color:#212529;transform:translate(0,0.69px) rotate(.05deg) scaleX(0.8964);">000011</span>
<span class="t" style="left:473.42px;top:233px;font-size:10.4px;color:#212529;transform:translate(0,0.69px) rotate(.05deg) scaleX(0.9473);">000012</span>
<span class="t" style="left:518.59px;top:233px;font-size:10.4px;color:#212529;transform:translate(0,0.68px) rotate(.05deg) scaleX(1.0704);">Blending</span>
<span class="t" style="left:616.24px;top:233px;font-size:10.4px;color:#212529;transform:translate(0,0.70px) rotate(.05deg) scaleX(0.8294);">10</span>
<span class="t" style="left:713.06px;top:233px;font-size:10.4px;color:#212529;transform:translate(0,0.69px) rotate(.05deg) scaleX(0.9870);">Ltrs</span>
<span class="t" style="left:810.01px;top:233px;font-size:10.4px;color:#212529;transform:translate(0,0.69px) rotate(.05deg) scaleX(0.9280);">FGH</span>
<span class="t" style="left:907.42px;top:233px;font-size:10.4px;color:#212529;transform:translate(0,0.67px) rotate(.05deg) scaleX(1.0358);">Brigade Road</span>
<svg style="left:98px;top:258px" width="14" height="13"><rect x="2.10" y="2.00" width="9.80" height="9.50" rx="1.70" fill="#fff" stroke="#cfd3dc" stroke-width="1"/></svg>
<span class="t" style="left:131.09px;top:255px;font-size:10.4px;color:#212529;transform:translate(0,0.18px) rotate(.05deg) scaleX(1.0037);">07/01/2025</span>
<span class="t" style="left:279.32px;top:255px;font-size:10.4px;color:#212529;transform:translate(0,0.19px) rotate(.05deg) scaleX(0.9355);">000012</span>
<span class="t" style="left:472.81px;top:255px;font-size:10.4px;color:#212529;transform:translate(0,0.19px) rotate(.05deg) scaleX(0.9633);">000016</span>
<span class="t" style="left:518.91px;top:255px;font-size:10.4px;color:#212529;transform:translate(0,0.18px) rotate(.05deg) scaleX(1.1055);">Cutting</span>
<span class="t" style="left:616.24px;top:255px;font-size:10.4px;color:#212529;transform:translate(0,0.20px) rotate(.05deg) scaleX(0.8294);">10</span>
<span class="t" style="left:713.06px;top:255px;font-size:10.4px;color:#212529;transform:translate(0,0.19px) rotate(.05deg) scaleX(0.9870);">Ltrs</span>
<span class="t" style="left:810.32px;top:255px;font-size:10.4px;color:#212529;transform:translate(0,0.18px) rotate(.05deg) scaleX(0.9905);">QC Store</span>
<span class="t" style="left:907.80px;top:255px;font-size:10.4px;color:#212529;transform:translate(0,0.18px) rotate(.05deg) scaleX(0.9646);">GIDC Store</span>
<svg style="left:86px;top:413px" width="912" height="8"><rect x="1.30" y="1.00" width="909.70" height="6.00" rx="3" fill="#c8c8c8"/></svg>
<svg style="left:0;top:0" width="1027" height="481"><path d="M0 0H1027V481H0ZM20 0H1007A20 20 0 0 1 1027 20V460.3A20 20 0 0 1 1007 480.3H20A20 20 0 0 1 0 460.3V20A20 20 0 0 1 20 0Z" fill="#fff" fill-rule="evenodd"/><path d="M20 0H1007A20 20 0 0 1 1027 20V460.3A20 20 0 0 1 1007 480.3H20A20 20 0 0 1 0 460.3V20A20 20 0 0 1 20 0ZM20.2 4.6H1006.3A15 15 0 0 1 1021.3 19.6V460A15 15 0 0 1 1006.3 475H20.2A15 15 0 0 1 5.2 460V19.6A15 15 0 0 1 20.2 4.6Z" fill="#000" fill-rule="evenodd"/></svg>
</div></div>
</body></html>
